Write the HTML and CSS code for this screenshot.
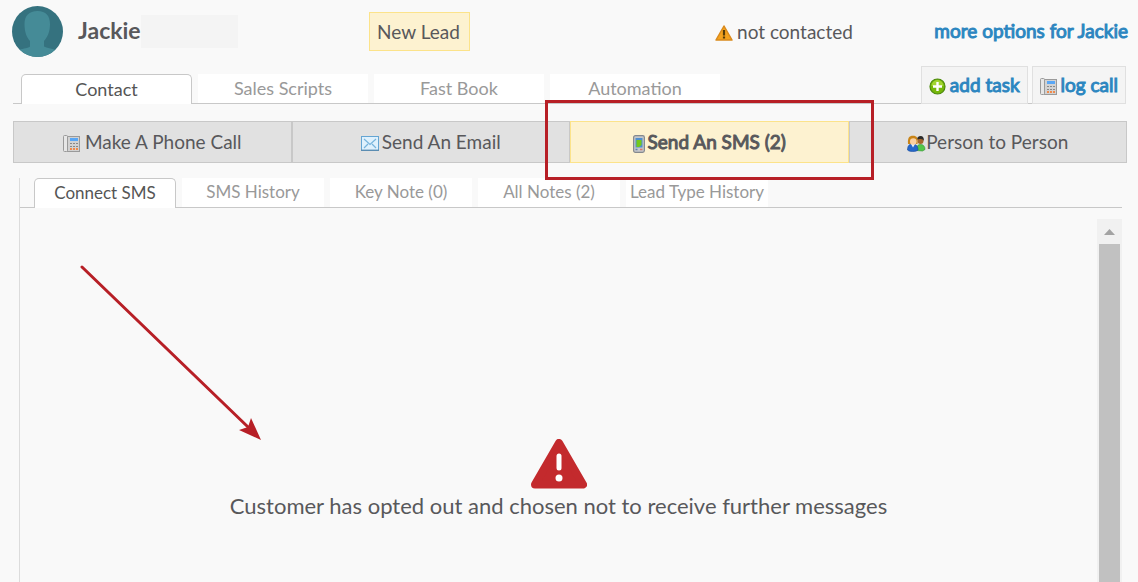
FILE: index.html
```
<!DOCTYPE html>
<html lang="en">
<head>
  <meta charset="UTF-8">
  <meta name="viewport" content="width=device-width, initial-scale=1">
  <title>Jackie - Lead</title>
  <link rel="stylesheet" href="styles.css">
</head>
<body>

<!-- Shared icons -->
<svg class="symbols" aria-hidden="true">
  <symbol id="phone" viewBox="0 0 17 17">
    <rect x="4.5" y="1.5" width="12" height="15" fill="#d2d2d2" stroke="#9a9a9a"/>
    <rect x=".5" y=".5" width="4" height="16" rx="1" fill="#e6e6e6" stroke="#9a9a9a"/>
    <rect x="7" y="3" width="8" height="3" fill="#5aa7f5"/>
    <path d="M7 8.500h2m1 0h2m1 0h2M7 11.500h2m1 0h2m1 0h2" stroke="#888" stroke-width="1"/>
    <path d="M7 14h2m1 0h2m1 0h2" stroke="#f08a4b" stroke-width="2"/>
  </symbol>
</svg>

<header class="lead-header">
  <div class="lead-name">
    <svg class="avatar" viewBox="0 0 51 51">
      <clipPath id="round"><circle cx="25.500" cy="25.500" r="25.500"/></clipPath>
      <g clip-path="url(#round)">
        <rect width="51" height="51" fill="#35727f"/>
        <path d="M25.500 5C17 5 12.500 10 12.500 18c0 8 2 13 5.500 17v5.500c-2 2-6 1.500-11 3.500V51h37v-7C39 42 35 42.500 32 40.500V35c3.500-4 6-9 6-17C38 10 34 5 25.500 5z" fill="#458b97"/>
      </g>
    </svg>
    <h1>Jackie</h1>
    <span class="last-name"></span>
  </div>
  <div><span class="lead-type">New Lead</span></div>
  <div class="status">
    <svg width="18" height="16" viewBox="0 0 18 16">
      <path d="M9 1L17 15H1z" fill="#f5a21d" stroke="#d98a1d" stroke-width="1.500" stroke-linejoin="round"/>
      <path d="M9 5v5.500M9 11.500v2" stroke="#553b08" stroke-width="2.200"/>
    </svg>
    not contacted
  </div>
  <a class="more" href="#">more options for Jackie</a>
</header>

<div class="tab-row">
  <nav class="tabs">
    <button class="tab active">Contact</button>
    <button class="tab">Sales Scripts</button>
    <button class="tab">Fast Book</button>
    <button class="tab">Automation</button>
  </nav>
  <div class="actions">
    <a class="action" href="#">
      <svg width="17" height="17" viewBox="0 0 17 17">
        <circle cx="8.500" cy="8.500" r="7.500" fill="#76b70a" stroke="#4c8a0b" stroke-width="1.200"/>
        <path d="M2.500 8a6 6 0 0 1 12 0z" fill="#a2d431"/>
        <path d="M8.500 4v9M4 8.500h9" stroke="#fff" stroke-width="2.400"/>
      </svg>
      add task
    </a>
    <a class="action" href="#">
      <svg width="17" height="17"><use href="#phone"/></svg>
      log call
    </a>
  </div>
</div>

<nav class="channels">
  <button class="channel"><svg class="wide-gap" width="17" height="17"><use href="#phone"/></svg>Make A Phone Call</button>
  <button class="channel">
    <svg width="18" height="15" viewBox="0 0 18 15">
      <rect x=".5" y=".5" width="17" height="14" fill="#dff1fd" stroke="#64a5d3"/>
      <path d="M3 3l6 5.500L15 3M3 12l4-4M15 12l-4-4" fill="none" stroke="#78b4dc" stroke-width="1.200"/>
      <path d="M0 14.300h18" stroke="#5b8db2" stroke-width="1.400"/>
    </svg>Send An Email
  </button>
  <button class="channel active">
    <svg width="12" height="18" viewBox="0 0 12 18">
      <rect x=".6" y=".6" width="10.800" height="16.800" rx="1.800" fill="#c5c7ca" stroke="#85898e" stroke-width="1.200"/>
      <rect x="2.500" y="3" width="7" height="9.500" fill="#4f8fce"/>
      <path d="M3.500 5h5v5L6 12H3.500z" fill="#74c91c"/>
      <path d="M2.500 14.500h2" stroke="#6080b0" stroke-width="1.500"/>
      <path d="M7 14.500h2.500" stroke="#dc7a68" stroke-width="1.500"/>
    </svg>Send An SMS (2)
  </button>
  <button class="channel">
    <svg class="no-gap" width="19" height="17" viewBox="0 0 19 17">
      <path d="M9.500 15.500c0-4 1-6 4-6s4.500 2 4.500 5l-2.500 1.500z" fill="#53c748" stroke="#2f9130" stroke-width=".6"/>
      <circle cx="13.500" cy="6" r="3" fill="#a6672c"/>
      <path d="M10 5c0-3 1.500-4 3.700-4S17 2.500 17 6c-1-2-3-2-4-2s-2 0-3 1z" fill="#2b2b2b"/>
      <path d="M.5 15c0-4 1.500-6 5-6s5.500 2 5.500 6c-2 2-8.500 2-10.500 0z" fill="#2667c9" stroke="#174b9d" stroke-width=".6"/>
      <path d="M4 9l2 3.500L8 9z" fill="#e6effa"/>
      <path d="M1 9C.5 3 2 .8 6 .8S11 3 10.500 9z" fill="#c98417"/>
      <circle cx="6.300" cy="6.500" r="3.300" fill="#fbd0a1"/>
    </svg>Person to Person
  </button>
</nav>

<main class="panel">
  <nav class="tabs sub-tabs">
    <button class="tab active">Connect SMS</button>
    <button class="tab">SMS History</button>
    <button class="tab">Key Note (0)</button>
    <button class="tab">All Notes (2)</button>
    <button class="tab">Lead Type History</button>
  </nav>
  <div class="messages">
    <div class="notice">
      <svg width="56" height="50" viewBox="0 0 56 50">
        <path d="M28 4L52 45.500H4z" fill="#c32a2d" stroke="#c32a2d" stroke-width="8" stroke-linejoin="round"/>
        <path d="M28 17v12" stroke="#fff" stroke-width="5" stroke-linecap="round"/>
        <circle cx="28" cy="39" r="3.500" fill="#fff"/>
      </svg>
      <p>Customer has opted out and chosen not to receive further messages</p>
    </div>
    <div class="scrollbar">
      <svg width="25" height="25" viewBox="0 0 25 25"><path d="M7 16l5.500-6L18 16z" fill="#a3a3a3"/></svg>
      <div class="thumb"></div>
    </div>
  </div>
</main>

<!-- Callouts -->
<div class="callout-box"></div>
<svg class="callout-arrow" width="184" height="178" viewBox="0 0 184 178">
  <path d="M2 2L168 162" stroke="#b71f26" stroke-width="3" stroke-linecap="round"/>
  <path d="M181 175l-22-10 9-3 3-9z" fill="#b71f26"/>
</svg>

</body>
</html>
```
FILE: styles.css
```
* {
  box-sizing: border-box;
}

body {
  margin: 0;
  padding: 6px 10px 0 12px;
  min-height: 100vh;
  display: flex;
  flex-direction: column;
  background: #f9f9f9;
  color: #58585b;
  font-family: Lato, sans-serif;
  font-size: 19px;
}

button {
  font: inherit;
  color: inherit;
  cursor: pointer;
}

a {
  color: #2c86c0;
  text-decoration: none;
  -webkit-text-stroke: 1px;
}

.symbols {
  position: absolute;
  width: 0;
  height: 0;
}

/* Header */
.lead-header {
  display: grid;
  grid-template-columns: 32% 31% auto 1fr;
  align-items: center;
  height: 51px;
}

.lead-name {
  display: flex;
  align-items: center;
}

.avatar {
  width: 51px;
  height: 51px;
  margin-right: 15px;
}

h1 {
  margin: 0;
  padding-bottom: 3px;
  font-size: 23px;
  font-weight: bold;
}

.last-name {
  width: 97px;
  height: 33px;
  background: #f4f4f4;
}

.lead-type {
  display: inline-block;
  padding: 0 9px 0 7px;
  border: 1px solid #fce38a;
  background: #fdf2d0;
  line-height: 37px;
}

.status {
  display: flex;
  align-items: center;
  gap: 4px;
}

.status svg {
  margin-top: 3px;
}

.more {
  padding-bottom: 2px;
  text-align: right;
}

/* Tabs */
.tab-row {
  display: flex;
  justify-content: space-between;
  align-items: flex-end;
  height: 38px;
  margin: 9px 2px 0 1px;
  border-bottom: 1px solid #c8c8c8;
}

.tabs {
  display: flex;
  gap: 6px;
  padding-left: 8px;
  font-size: 18px;
}

.tab {
  width: 170px;
  height: 29px;
  padding: 0 0 2px;
  border: 0;
  background: #fff;
  color: #999;
}

.tab.active {
  width: 171px;
  height: 30px;
  margin-bottom: -1px;
  border: 1px solid #c8c8c8;
  border-bottom: 0;
  border-radius: 5px 5px 0 0;
  color: #555;
}

.actions {
  display: flex;
  gap: 4px;
  margin-bottom: -1px;
}

.action {
  display: flex;
  align-items: center;
  gap: 4px;
  height: 38px;
  padding: 0 7px 2px;
  border: 1px solid #e0e0e0;
  background: #f4f4f4;
}

.action svg {
  margin-top: 4px;
}

/* Contact channels */
.channels {
  display: flex;
  margin: 17px 1px 0;
}

.channel {
  flex: 1;
  display: flex;
  justify-content: center;
  align-items: center;
  height: 42px;
  padding: 0 0 2px;
  border: 1px solid #c8c8c8;
  background: #e1e1e1;
}

.channel svg {
  margin: 5px 3px 0 0;
}

.channel .wide-gap {
  margin-right: 5px;
}

.channel .no-gap {
  margin-right: 0;
}

.channel.active {
  border-color: #fce38a;
  background: #fdf2d0;
  -webkit-text-stroke: 1px;
}

/* Messages panel */
.panel {
  flex: 1;
  display: flex;
  flex-direction: column;
  margin: 15px 6px 0 7px;
  border-left: 1px solid #dcdcdc;
}

.sub-tabs {
  padding-left: 14px;
  border-bottom: 1px solid #c8c8c8;
  font-size: 17px;
}

.sub-tabs .tab {
  width: 142px;
}

.messages {
  flex: 1;
  display: flex;
  margin-top: 11px;
}

.notice {
  flex: 1;
  padding-top: 220px;
  text-align: center;
  font-size: 22px;
}

.notice svg {
  display: block;
  margin: 0 auto;
}

.notice p {
  margin: 0;
  line-height: 34px;
}

.scrollbar {
  display: flex;
  flex-direction: column;
  width: 25px;
  background: #f1f1f1;
}

.thumb {
  flex: 1;
  margin: 0 2px;
  background: #c1c1c1;
}

/* Callouts lie over the page */
.callout-box {
  position: absolute;
  left: 545px;
  top: 100px;
  width: 329px;
  height: 80px;
  border: 3px solid #b71f26;
}

.callout-arrow {
  position: absolute;
  left: 80px;
  top: 265px;
}
```
